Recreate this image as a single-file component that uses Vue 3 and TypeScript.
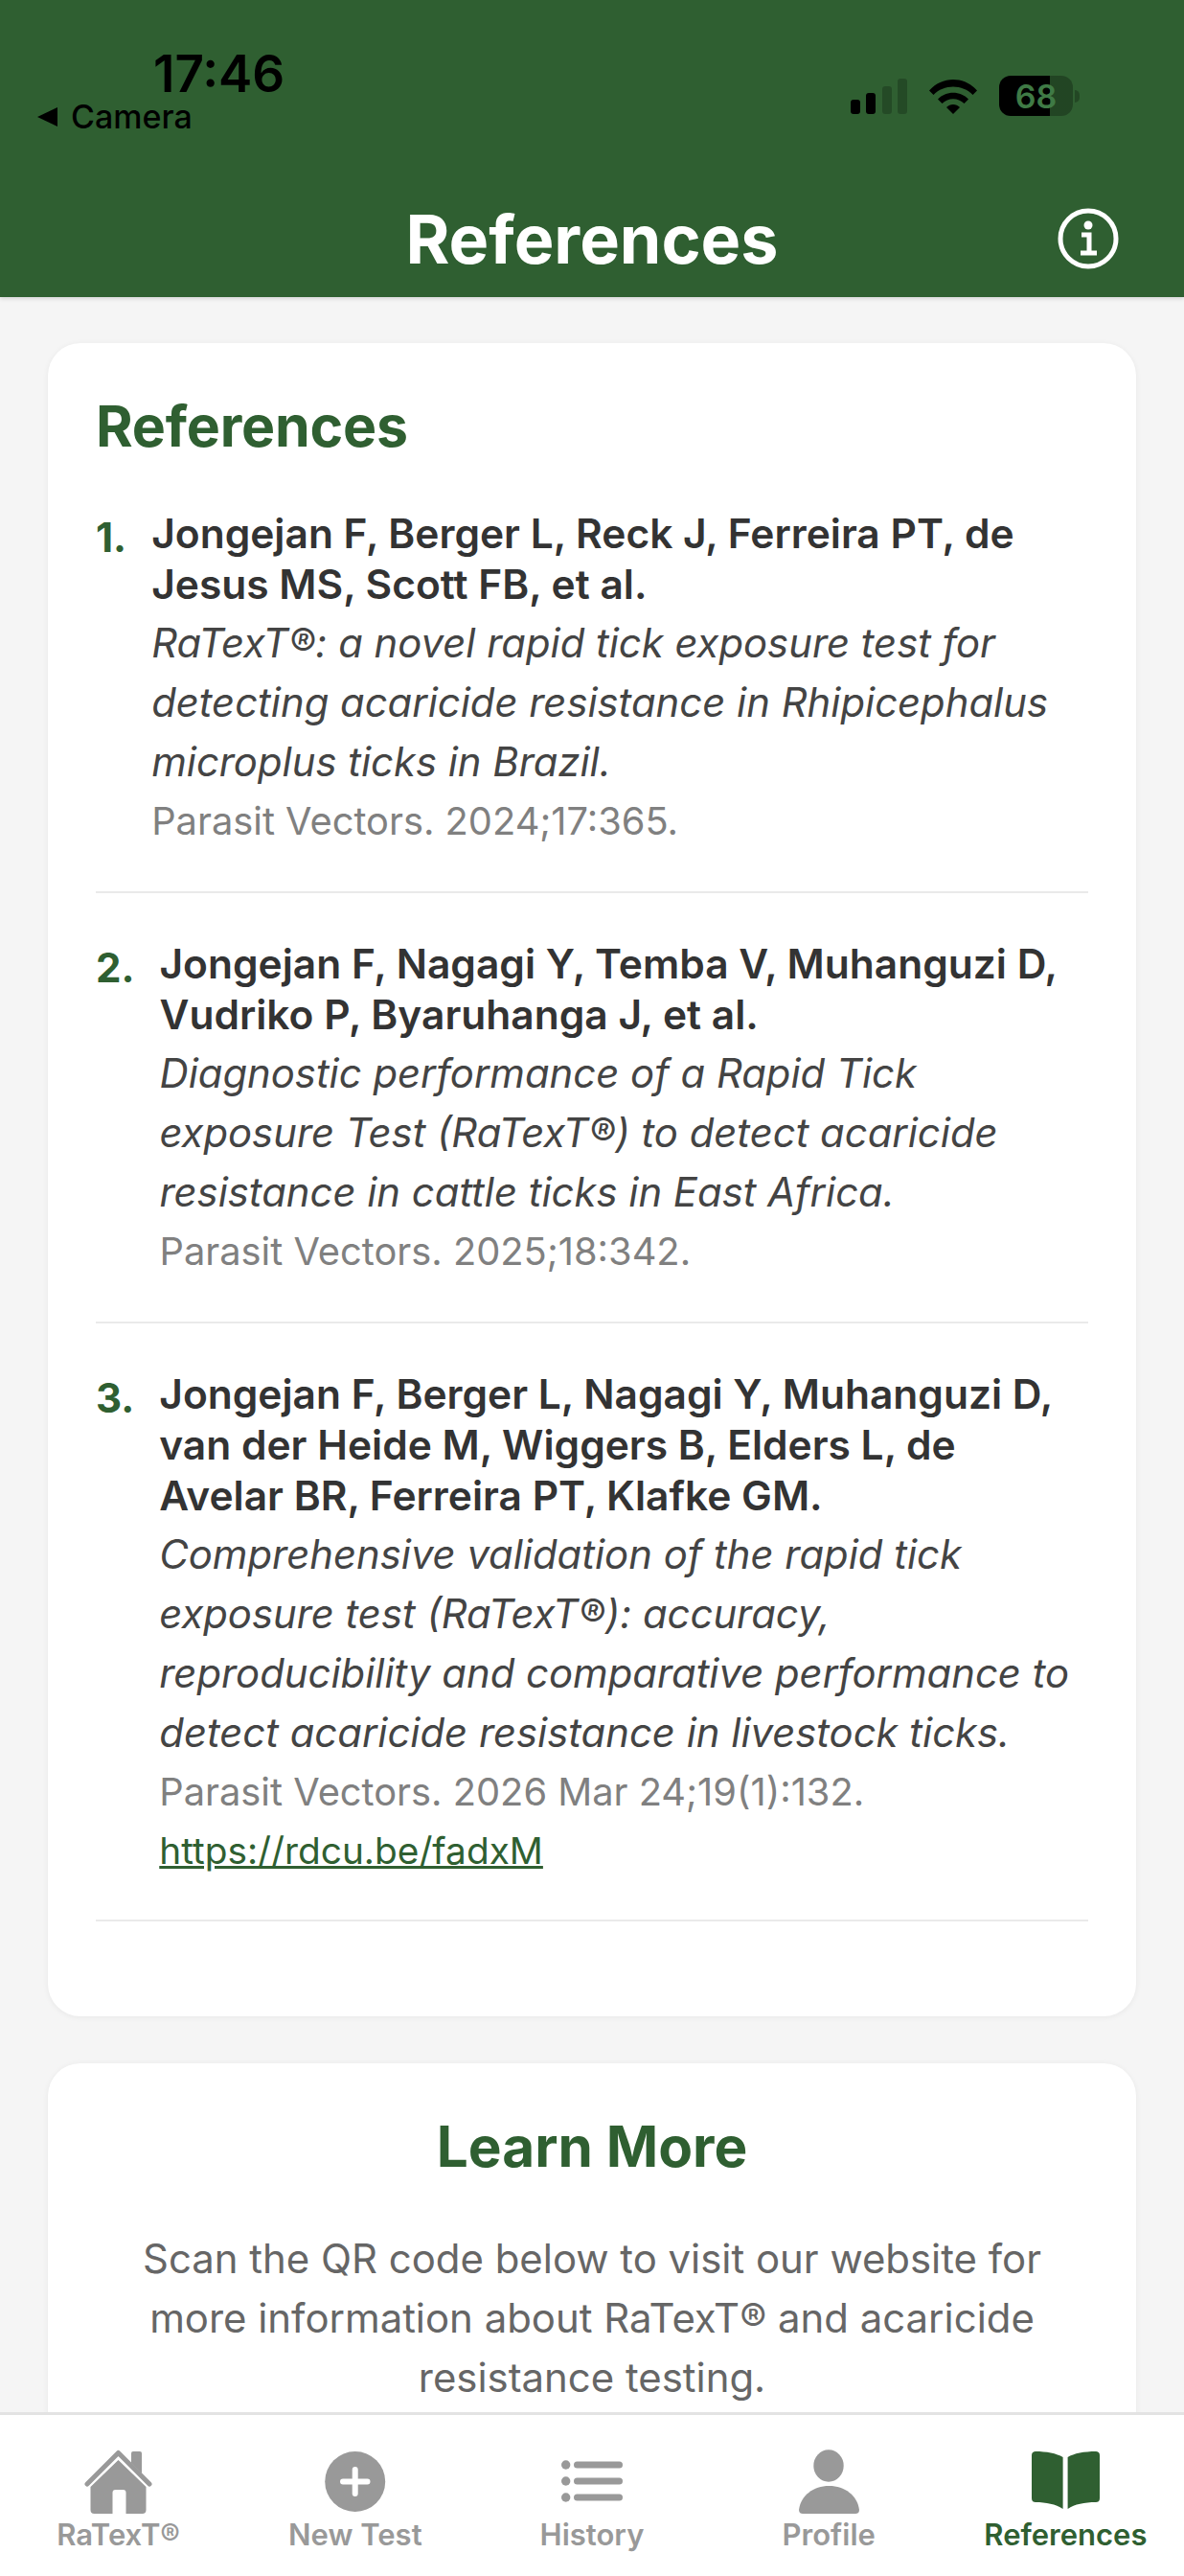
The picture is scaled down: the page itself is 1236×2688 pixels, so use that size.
<script setup lang="ts">
interface Reference {
  authors: string
  title: string
  journal: string
  link?: string
}

const references: Reference[] = [
  {
    authors: 'Jongejan F, Berger L, Reck J, Ferreira PT, de Jesus MS, Scott FB, et al.',
    title: 'RaTexT®: a novel rapid tick exposure test for detecting acaricide resistance in Rhipicephalus microplus ticks in Brazil.',
    journal: 'Parasit Vectors. 2024;17:365.'
  },
  {
    authors: 'Jongejan F, Nagagi Y, Temba V, Muhanguzi D, Vudriko P, Byaruhanga J, et al.',
    title: 'Diagnostic performance of a Rapid Tick exposure Test (RaTexT®) to detect acaricide resistance in cattle ticks in East Africa.',
    journal: 'Parasit Vectors. 2025;18:342.'
  },
  {
    authors: 'Jongejan F, Berger L, Nagagi Y, Muhanguzi D, van der Heide M, Wiggers B, Elders L, de Avelar BR, Ferreira PT, Klafke GM.',
    title: 'Comprehensive validation of the rapid tick exposure test (RaTexT®): accuracy, reproducibility and comparative performance to detect acaricide resistance in livestock ticks.',
    journal: 'Parasit Vectors. 2026 Mar 24;19(1):132.',
    link: 'https://rdcu.be/fadxM'
  }
]

const tabs = [
  { label: 'RaTexT®', icon: 'home' },
  { label: 'New Test', icon: 'plus' },
  { label: 'History', icon: 'list' },
  { label: 'Profile', icon: 'person' },
  { label: 'References', icon: 'book' }
]
</script>

<template>
  <div class="screen">
    <header class="header">
      <div class="status">
        <div class="status__left">
          <span class="status__time">17:46</span>
          <span class="status__back"><i class="status__arrow"></i>Camera</span>
        </div>
        <div class="status__right">
          <svg width="59" height="37" viewBox="0 0 59 37">
            <rect x="0" y="22" width="10" height="15" rx="3" fill="#000" />
            <rect x="16" y="15" width="10" height="22" rx="3" fill="#000" />
            <rect x="33" y="8" width="10" height="29" rx="3" fill="#000" opacity=".22" />
            <rect x="49" y="0" width="10" height="37" rx="3" fill="#000" opacity=".22" />
          </svg>
          <svg width="52" height="38" viewBox="0 0 52 38">
            <path d="M1 13.5C14 -2 38 -2 51 13.5L46.5 18C36 6.5 16 6.5 5.500 18Z" fill="#000" />
            <path d="M10 22.500C18.500 13.500 33.500 13.500 42 22.500L37.500 27C31 20.500 21 20.500 14.500 27Z" fill="#000" />
            <path d="M19 31C23 27 29 27 33 31L26 38Z" fill="#000" />
          </svg>
          <div class="battery">
            <div class="battery__body"><span>68</span></div>
            <i class="battery__nub"></i>
          </div>
        </div>
      </div>
      <div class="nav">
        <h1 class="nav__title">References</h1>
        <svg class="nav__info" width="64" height="64" viewBox="0 0 64 64" fill="none" stroke="#fff">
          <circle cx="32" cy="32" r="29" stroke-width="5" />
          <circle cx="32" cy="18" r="4.500" fill="#fff" stroke="none" />
          <path d="M25 28H33V46M24 47H41" stroke-width="5" />
        </svg>
      </div>
    </header>

    <main class="content">
      <section class="card">
        <h2 class="card__title">References</h2>
        <ol class="refs">
          <li v-for="(item, i) in references" :key="i" class="ref">
            <span class="ref__num">{{ i + 1 }}.</span>
            <div class="ref__body">
              <p class="ref__authors">{{ item.authors }}</p>
              <p class="ref__title">{{ item.title }}</p>
              <p class="ref__journal">{{ item.journal }}</p>
              <a v-if="item.link" class="ref__link" href="#">{{ item.link }}</a>
            </div>
          </li>
        </ol>
      </section>

      <section class="card card--learn">
        <h2 class="learn__title">Learn More</h2>
        <p class="learn__text">Scan the QR code below to visit our website for more information about RaTexT® and acaricide resistance testing.</p>
      </section>
    </main>

    <nav class="tabs">
      <div v-for="tab in tabs" :key="tab.label" class="tab" :class="{ 'tab--active': tab.icon === 'book' }">
        <svg class="tab__icon" width="80" height="70" viewBox="0 0 80 70">
          <g v-if="tab.icon === 'home'" fill="#999">
            <path d="M39.500 11L68.500 39V63Q68.500 67 64.500 67H47.500V45Q47.500 42 44.500 42H36.500Q33.500 42 33.500 45V67H14.500Q10.500 67 10.500 63V39Z" />
            <path d="M53 14V4Q53 2 55 2H62Q64 2 64 4V25Z" />
            <path d="M7 36L39.500 3.500L72 36" fill="none" stroke="#999" stroke-width="5" stroke-linecap="round" stroke-linejoin="round" />
          </g>
          <g v-else-if="tab.icon === 'plus'">
            <circle cx="39.700" cy="33.500" r="31.500" fill="#999" />
            <path d="M39.700 21V46M27 33.500H52.500" stroke="#fff" stroke-width="6" stroke-linecap="round" />
          </g>
          <g v-else-if="tab.icon === 'list'" fill="#999">
            <circle cx="12.700" cy="16" r="4.700" />
            <circle cx="12.700" cy="33" r="4.700" />
            <circle cx="12.700" cy="50" r="4.700" />
            <rect x="21" y="12.500" width="51" height="7" rx="3.500" />
            <rect x="21" y="29.500" width="51" height="7" rx="3.500" />
            <rect x="21" y="46.500" width="51" height="7" rx="3.500" />
          </g>
          <g v-else-if="tab.icon === 'person'" fill="#999">
            <ellipse cx="40" cy="17" rx="15.700" ry="16.700" />
            <path d="M9 63C11 48 24 38 40.500 38C57 38 70 48 72 63C72 66 70 67 68 67H13C11 67 9 66 9 63Z" />
          </g>
          <g v-else fill="#2f5f31">
            <path d="M5 6C5 3 7 2 9 2C20 2 31 4 37.600 8V62C30 57 20 55 9 55C7 55 5 54 5 51Z" />
            <path d="M76 6C76 3 74 2 72 2C60 2 49 4 42.600 8V62C50 57 60 55 72 55C74 55 76 54 76 51Z" />
          </g>
        </svg>
        <span class="tab__label">{{ tab.label }}</span>
      </div>
    </nav>
  </div>
</template>

<style>
html,
body {
  margin: 0;
  background: #f5f5f5;
}
</style>

<style scoped>
.screen {
  display: flex;
  flex-direction: column;
  height: 2688px;
  overflow: hidden;
  font-family: Inter, "Liberation Sans", sans-serif;
  background: #f5f5f5;
}

.header {
  background: #2f5f31;
  box-sizing: border-box;
  flex: none;
  height: 310px;
  padding: 50px 71px 0 39px;
  box-shadow: 0 2px 4px rgba(0, 0, 0, 0.12);
  z-index: 1;
}

.status {
  display: flex;
  justify-content: space-between;
  height: 90px;
}

.status__left {
  display: flex;
  flex-direction: column;
}

.status__time {
  color: #000;
  font-size: 53px;
  font-weight: 600;
  line-height: 54px;
  margin-left: 121px;
}

.status__back {
  align-items: center;
  color: #000;
  display: flex;
  font-size: 34px;
  font-weight: 500;
  line-height: 36px;
  gap: 14px;
}

.status__arrow {
  border-bottom: 10px solid transparent;
  border-right: 21px solid #000;
  border-top: 10px solid transparent;
}

.status__right {
  align-items: center;
  display: flex;
  gap: 22px;
  height: 42px;
  margin-top: 29px;
  margin-right: 38px;
}

.battery {
  align-items: center;
  display: flex;
  gap: 2px;
}

.battery__body {
  align-items: center;
  background: linear-gradient(90deg, #000 69%, rgba(0, 0, 0, 0.28) 69%);
  border-radius: 12px;
  color: #3f7a45;
  display: flex;
  font-size: 34px;
  font-weight: 600;
  height: 42px;
  justify-content: center;
  width: 77px;
}

.battery__nub {
  background: rgba(0, 0, 0, 0.25);
  border-radius: 0 5px 5px 0;
  height: 13px;
  width: 5px;
}

.nav {
  align-items: center;
  display: flex;
  justify-content: center;
  margin-top: 70px;
  position: relative;
}

.nav__title {
  color: #fff;
  font-size: 70px;
  font-weight: 700;
  line-height: 80px;
  margin: 0 0 0 32px;
}

.nav__info {
  position: absolute;
  right: -3px;
  top: 7px;
}

.content {
  flex: 1;
  min-height: 0;
  overflow: hidden;
  padding: 48px 50px 0;
}

.card {
  background: #fff;
  border-radius: 34px;
  box-shadow: 0 1px 6px rgba(0, 0, 0, 0.06);
  padding: 50px 50px 52px;
}

.card__title {
  color: #2f5f31;
  font-size: 59px;
  font-weight: 700;
  letter-spacing: -0.2px;
  line-height: 74px;
  margin: 0 0 48px;
}

.refs {
  list-style: none;
  margin: 0;
  padding: 0;
}

.ref {
  border-bottom: 2px solid #eaeaea;
  display: flex;
  gap: 26px;
  margin-bottom: 47px;
  padding-bottom: 42px;
}

.ref:last-child {
  padding-bottom: 42px;
}

.ref__num {
  color: #2f5f31;
  flex: none;
  font-size: 42px;
  font-weight: 700;
  line-height: 62px;
}

.ref__body {
  color: #333;
  font-size: 42px;
  line-height: 62px;
  min-width: 0;
}

.ref__body p {
  margin: 0;
}

.ref__authors {
  font-size: 42.5px;
  font-weight: 600;
  line-height: 53px;
  margin-bottom: 4px !important;
}

.ref__title {
  font-size: 41.8px;
  font-style: italic;
  color: #444;
}

.ref__journal {
  color: #808080;
  font-size: 39.8px;
}

.ref__link {
  color: #2f5f31;
  display: block;
  font-size: 38.8px;
  line-height: 60px;
  text-decoration: underline;
}

.card--learn {
  margin-top: 49px;
  padding: 50px 70px;
  text-align: center;
}

.learn__title {
  color: #2f5f31;
  font-size: 58.5px;
  font-weight: 700;
  line-height: 74px;
  margin: 0 0 49px;
}

.learn__text {
  color: #666;
  font-size: 41.9px;
  line-height: 62px;
  margin: 0;
}

.tabs {
  background: #fff;
  border-top: 3px solid #e3e3e3;
  box-sizing: border-box;
  display: grid;
  flex: none;
  grid-template-columns: repeat(5, 1fr);
  height: 171px;
  padding-top: 36px;
}

.tab {
  align-items: center;
  color: #999;
  display: flex;
  flex-direction: column;
}

.tab--active {
  color: #2f5f31;
}

.tab__icon {
  display: block;
}

.tab__label {
  font-size: 31px;
  font-weight: 600;
  line-height: 36px;
  margin-top: 1px;
  white-space: nowrap;
}
</style>
